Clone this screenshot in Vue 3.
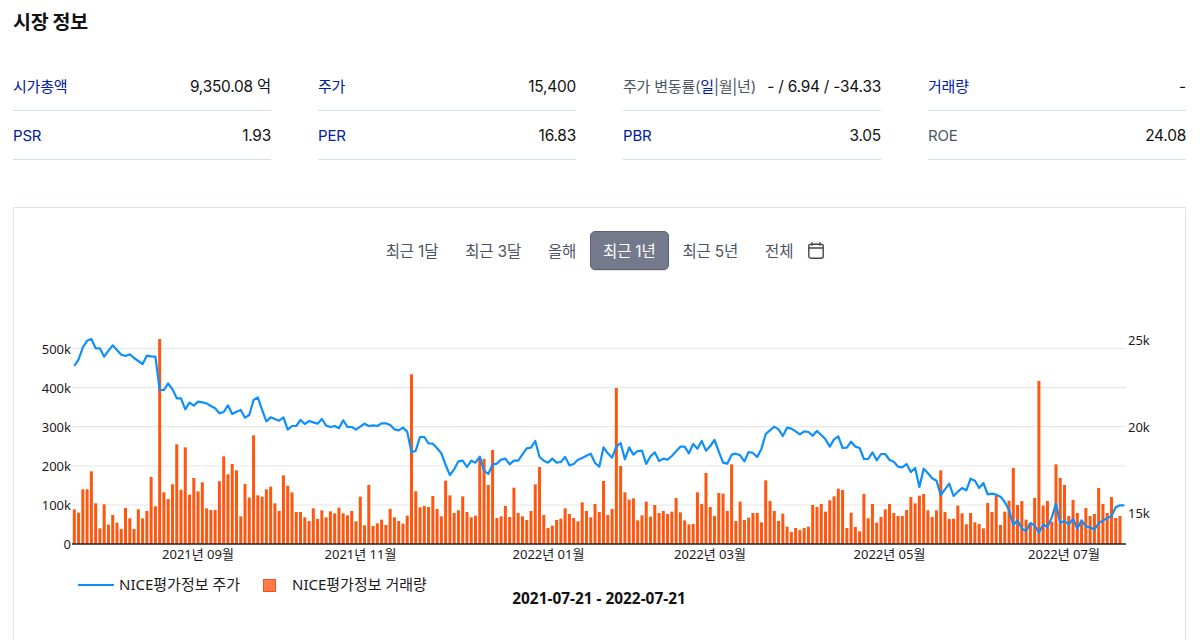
<script setup>
const metrics = [
  { label: '시가총액', value: '9,350.08 억', link: true },
  { label: '주가', value: '15,400', link: true },
  { label: 'rate', value: '- / 6.94 / -34.33' },
  { label: '거래량', value: '-', link: true },
  { label: 'PSR', value: '1.93', link: true },
  { label: 'PER', value: '16.83', link: true },
  { label: 'PBR', value: '3.05', link: true },
  { label: 'ROE', value: '24.08' }
]
const tabs = ['최근 1달', '최근 3달', '올해', '최근 1년', '최근 5년', '전체']

const barZ = [538,548,478,478,424,520,595,523,584,555,578,597,534,565,597,538,565,543,441,529,27,487,507,463,343,479,352,494,444,484,457,535,540,540,454,379,433,402,421,559,462,503,316,496,500,478,470,520,543,436,467,487,546,
546,562,573,535,567,541,562,544,550,533,550,556,543,574,500,586,465,588,580,569,585,537,562,573,581,557,133,484,532,528,531,498,537,559,452,496,549,541,499,546,562,557,385,387,465,360,564,559,528,561,473,549,559,570,543,463,411,555,594,587,570,566,535,552,564,574,517,543,562,522,546,
453,555,537,174,408,487,509,505,571,556,515,560,525,549,543,552,545,504,547,571,583,582,487,522,429,531,558,489,491,543,403,573,515,570,563,549,549,577,451,513,543,573,551,590,606,594,600,594,590,525,531,522,545,511,499,476,480,594,548,591,604,492,565,522,578,561,538,522,549,558,
558,540,501,520,497,492,541,561,541,421,546,567,566,527,550,583,549,577,582,595,519,546,497,585,545,512,414,525,513,569,582,504,153,527,513,575,403,444,465,558,510,549,575,534,558,552,474,522,549,501,564,558]

const lineZ = [108,88,52,32,27,55,55,80,62,46,60,74,78,73,84,93,102,77,79,80,180,180,160,178,205,205,238,218,227,215,217,220,228,235,250,246,226,252,245,240,263,255,210,202,240,274,262,267,272,262,299,288,288,
270,282,273,277,281,267,287,291,288,295,271,291,291,299,290,281,288,286,288,280,280,285,298,301,293,305,367,362,321,321,340,341,355,370,405,435,418,394,392,411,392,398,380,422,432,403,401,389,386,403,392,392,373,355,353,333,381,392,398,386,398,396,381,406,402,389,384,377,371,399,410,
352,370,383,350,339,388,352,374,363,362,402,379,367,393,386,389,378,364,350,350,370,342,356,333,362,348,330,365,398,401,374,371,376,394,366,369,381,356,312,301,290,298,318,293,296,304,313,304,306,317,303,315,328,350,328,319,354,353,335,350,354,387,387,367,391,372,372,390,395,410,
412,402,426,414,471,416,430,445,452,495,478,461,498,485,474,481,446,452,474,459,493,491,494,500,516,540,585,571,596,603,579,587,608,584,590,563,521,579,573,583,567,596,571,589,592,599,579,572,564,558,532,526,526]

// Chart coordinates are page pixels minus the origin of the svg inside the card.
const OX = 14
const OY = 292
const x0 = 74.3 - OX
const step = (1120 - 74.3) / (barZ.length - 1)
const base = 544 - OY

const bars = barZ.map((z, i) => ({
  x: (x0 + i * step - 1.5).toFixed(2),
  y: (base - (642 - z) / 3).toFixed(2),
  h: ((642 - z) / 3).toFixed(2)
}))
const linePoints = lineZ
  .map((z, i) => `${(x0 + i * step).toFixed(2)},${(330 + z / 3 - OY).toFixed(2)}`)
  .join(' ')

const grid = [348.5, 387.6, 426.7, 466, 505].map(y => y - OY)
const leftTicks = [
  { t: '500k', y: 349 }, { t: '400k', y: 388 }, { t: '300k', y: 427 },
  { t: '200k', y: 466 }, { t: '100k', y: 505 }, { t: '0', y: 544 }
].map(a => ({ t: a.t, y: a.y - OY + 5 }))
const rightTicks = [
  { t: '25k', y: 340 }, { t: '20k', y: 426.5 }, { t: '15k', y: 513 }
].map(a => ({ t: a.t, y: a.y - OY + 5 }))
const xTicks = [
  { t: '2021년 09월', x: 198 }, { t: '2021년 11월', x: 360.5 }, { t: '2022년 01월', x: 548.5 },
  { t: '2022년 03월', x: 710 }, { t: '2022년 05월', x: 889.5 }, { t: '2022년 07월', x: 1064 }
].map(a => ({ t: a.t, x: a.x - OX }))
</script>

<template>
  <div class="page">
    <h2 class="title">시장 정보</h2>
    <div class="metrics">
      <div v-for="m in metrics" :key="m.label" class="metric">
        <span v-if="m.label === 'rate'" class="label">주가 변동률(<span class="blue">일</span>|월|년)</span>
        <span v-else class="label" :class="{ blue: m.link }">{{ m.label }}</span>
        <span class="value">{{ m.value }}</span>
      </div>
    </div>
    <div class="card">
      <div class="tabs">
        <button v-for="t in tabs" :key="t" class="tab" :class="{ active: t === '최근 1년' }">{{ t }}</button>
        <svg class="cal" width="16" height="17" viewBox="0 0 16 17" fill="none" stroke="#3f4654" stroke-width="1.4">
          <rect x="0.8" y="2.2" width="14.4" height="14" rx="2" />
          <path d="M0.8 6h14.4M4 0.3v3.4M12 0.3v3.4" />
        </svg>
      </div>
      <svg class="chart" width="1170" height="340" viewBox="0 0 1170 340">
        <line v-for="y in grid" :key="y" x1="58" x2="1112" :y1="y" :y2="y" stroke="#e6e6e6" stroke-width="1.2" />
        <g>
          <rect v-for="(b, i) in bars" :key="i" :x="b.x" :y="b.y" width="3" :height="b.h" fill="#ff5610" />
        </g>
        <line x1="58" x2="1112" :y1="base" :y2="base" stroke="#222" stroke-width="1.3" />
        <polyline :points="linePoints" fill="none" stroke="#0f8ffa" stroke-width="2.2" stroke-linejoin="round" />
        <text v-for="t in leftTicks" :key="t.t" class="axis" x="57" :y="t.y" text-anchor="end">{{ t.t }}</text>
        <text v-for="t in rightTicks" :key="t.t" class="axis" x="1114" :y="t.y">{{ t.t }}</text>
        <text v-for="t in xTicks" :key="t.t" class="axis" :x="t.x" y="267" text-anchor="middle">{{ t.t }}</text>
        <line x1="64" x2="100" y1="293" y2="293" stroke="#0f8ffa" stroke-width="2" />
        <text class="legend" x="105" y="298">NICE평가정보 주가</text>
        <rect x="249.5" y="287.5" width="12" height="12" fill="#ff7a45" stroke="#f4511e" />
        <text class="legend" x="278" y="298">NICE평가정보 거래량</text>
        <text class="range" x="585" y="312" text-anchor="middle">2021-07-21 - 2022-07-21</text>
      </svg>
    </div>
  </div>
</template>

<style scoped>
.page {
  width: 1200px;
  height: 640px;
  overflow: hidden;
  box-sizing: border-box;
  padding: 10px 14px 0 13px;
  font-family: Inter, "Noto Sans CJK KR", sans-serif;
  color: #111;
  background: #fff;
}
.title {
  margin: 0;
  font-size: 19.5px;
  line-height: 24px;
  font-weight: 700;
  letter-spacing: -0.3px;
}
.metrics {
  display: grid;
  grid-template-columns: repeat(4, 258px);
  column-gap: 47px;
  margin-top: 28px;
}
.metric {
  display: flex;
  justify-content: space-between;
  align-items: baseline;
  height: 49px;
  box-sizing: border-box;
  padding-top: 15px;
  line-height: 20px;
  border-bottom: 1px solid #d5deeb;
  font-size: 15.4px;
  letter-spacing: -0.2px;
  white-space: nowrap;
}
.label { color: #4b5563; font-size: 15px; }
.blue { color: #00209f; }
.value { color: #111; }
.card {
  margin-top: 47px;
  height: 480px;
  box-sizing: border-box;
  border: 1.2px solid #dbe3ef;
}
.tabs {
  display: flex;
  justify-content: center;
  align-items: center;
  height: 84px;
  padding-right: 3px;
}
.tab {
  height: 39px;
  padding: 0 12.5px;
  border: 1.5px solid transparent;
  border-radius: 5px;
  background: transparent;
  font-family: inherit;
  font-size: 15.5px;
  letter-spacing: -0.2px;
  color: #4b5563;
}
.tab.active {
  background: #747a8b;
  border-color: #5d6476;
  color: #fff;
  box-shadow: 0 1px 1px rgba(0, 0, 0, 0.12);
}
.cal { margin-left: 1px; }
.chart { display: block; }
.axis {
  font-family: "Noto Sans", "Noto Sans CJK KR", sans-serif;
  font-size: 13px;
  fill: #1a1a1a;
}
.legend {
  font-family: "Noto Sans", "Noto Sans CJK KR", sans-serif;
  font-size: 15px;
  fill: #1a1a1a;
}
.range {
  font-family: "Noto Sans", "Noto Sans CJK KR", sans-serif;
  font-size: 15.4px;
  font-weight: 700;
  fill: #111;
}
</style>

<style>
html, body { margin: 0; overflow: hidden; background: #fff; }
</style>
